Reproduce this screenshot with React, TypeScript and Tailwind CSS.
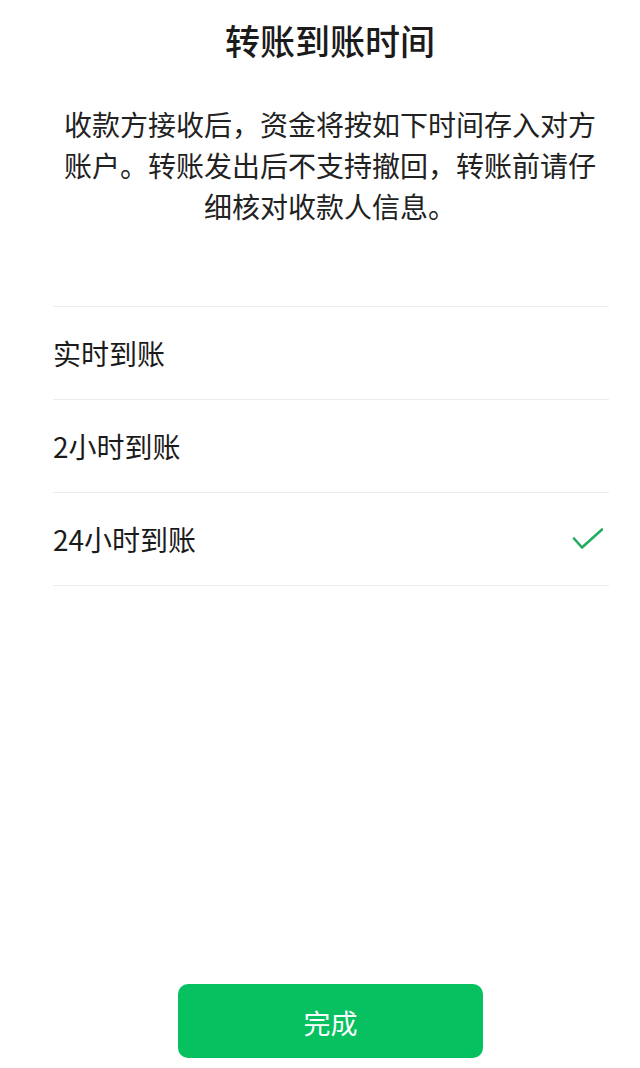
import React from "react";

const font = { fontFamily: '"Noto Sans CJK SC", "Noto Sans", sans-serif' };

function Check() {
  return (
    <svg width="32" height="22" viewBox="0 0 32 22" fill="none">
      <path d="M3 10.5 L11 19.5 L31 1.5" stroke="#22ad5e" strokeWidth="2.6" strokeLinecap="round" strokeLinejoin="round" />
    </svg>
  );
}

export default function App() {
  const rows = [
    { label: "实时到账", checked: false },
    { label: "2小时到账", checked: false },
    { label: "24小时到账", checked: true },
  ];
  return (
    <div className="flex min-h-[1068px] w-[640px] flex-col bg-white text-[#1b1b1b]" style={font}>
      <h1 className="mt-[16px] pl-[20px] text-center text-[35px] font-medium leading-[48px]">转账到账时间</h1>
      <p className="ml-[61px] mr-[41px] mt-[40px] text-center text-[28px] leading-[41px] text-[#222]">
        收款方接收后，资金将按如下时间存入对方账户。转账发出后不支持撤回，转账前请仔细核对收款人信息。
      </p>
      <div className="ml-[53px] mr-[31px] mt-[79px] border-b border-[#ececec]">
        {rows.map((r) => (
          <div key={r.label} className="flex h-[93px] items-center justify-between border-t border-[#ececec] pr-[6px]">
            <span className="text-[28px] leading-none">{r.label}</span>
            {r.checked && <Check />}
          </div>
        ))}
      </div>
      <div className="mt-auto flex pb-[10px]">
        <button className="ml-[178px] flex h-[74px] w-[305px] items-center justify-center rounded-[10px] bg-[#07c160] pt-[4px] text-[27px] text-white">
          完成
        </button>
      </div>
    </div>
  );
}
